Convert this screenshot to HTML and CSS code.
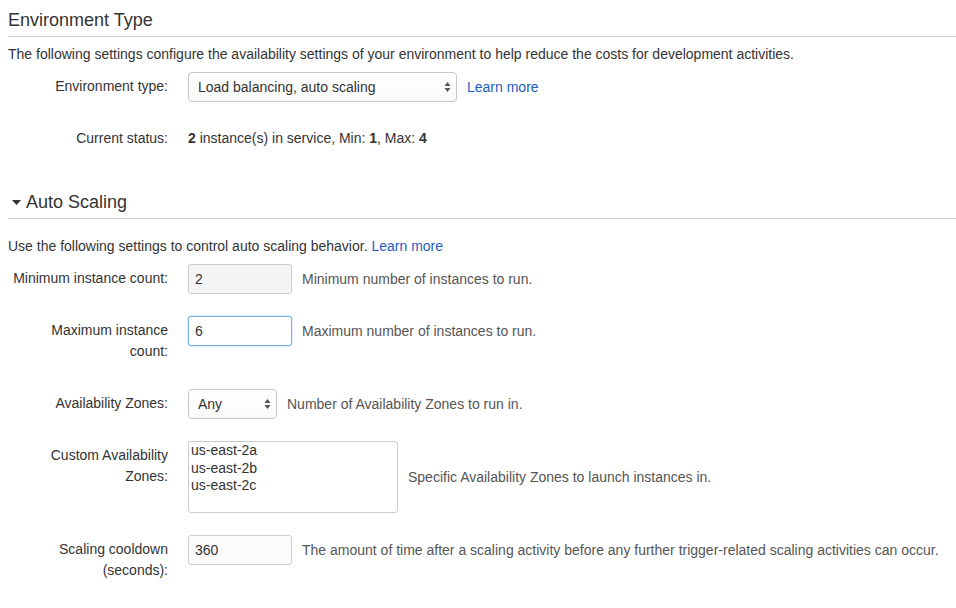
FILE: index.html
```html
<!DOCTYPE html>
<html lang="en">
<head>
<meta charset="utf-8">
<title>Environment Type</title>
<link rel="stylesheet" href="styles.css">
</head>
<body>
<div class="page">
  <section class="section">
    <h2 class="section-title">Environment Type</h2>
    <p class="intro">The following settings configure the availability settings of your environment to help reduce the costs for development activities.</p>
    <div class="row">
      <div class="label">Environment type:</div>
      <div class="field">
        <div class="select select-wide">
          <span>Load balancing, auto scaling</span>
          <svg class="arrows" width="7" height="12" viewBox="0 0 7 12"><path d="M3.5 1 L6.5 5 L0.5 5 Z M3.5 11 L6.5 7 L0.5 7 Z" fill="#555"/></svg>
        </div>
        <a class="link" href="#">Learn more</a>
      </div>
    </div>
    <div class="row">
      <div class="label">Current status:</div>
      <div class="value"><b>2</b> instance(s) in service, Min: <b>1</b>, Max: <b>4</b></div>
    </div>
  </section>

  <section class="section section-second">
    <h2 class="section-title">
      <svg class="caret" width="9" height="5" viewBox="0 0 9 5"><path d="M0 0 L9 0 L4.5 5 Z" fill="#333"/></svg>Auto Scaling
    </h2>
    <p class="intro intro-second">Use the following settings to control auto scaling behavior. <a class="link" href="#">Learn more</a></p>

    <div class="row">
      <div class="label">Minimum instance count:</div>
      <div class="field">
        <input class="input input-readonly" type="text" value="2">
        <span class="help">Minimum number of instances to run.</span>
      </div>
    </div>

    <div class="row">
      <div class="label">Maximum instance count:</div>
      <div class="field">
        <input class="input input-focus" type="text" value="6">
        <span class="help">Maximum number of instances to run.</span>
      </div>
    </div>

    <div class="row">
      <div class="label">Availability Zones:</div>
      <div class="field">
        <div class="select select-small">
          <span>Any</span>
          <svg class="arrows" width="7" height="12" viewBox="0 0 7 12"><path d="M3.5 1 L6.5 5 L0.5 5 Z M3.5 11 L6.5 7 L0.5 7 Z" fill="#555"/></svg>
        </div>
        <span class="help">Number of Availability Zones to run in.</span>
      </div>
    </div>

    <div class="row">
      <div class="label">Custom Availability Zones:</div>
      <div class="field">
        <div class="listbox">
          <div class="option">us-east-2a</div>
          <div class="option">us-east-2b</div>
          <div class="option">us-east-2c</div>
        </div>
        <span class="help">Specific Availability Zones to launch instances in.</span>
      </div>
    </div>

    <div class="row">
      <div class="label">Scaling cooldown (seconds):</div>
      <div class="field">
        <input class="input input-light" type="text" value="360">
        <span class="help">The amount of time after a scaling activity before any further trigger-related scaling activities can occur.</span>
      </div>
    </div>
  </section>
</div>
</body>
</html>
```

FILE: styles.css
```css
* {
  box-sizing: border-box;
}

html, body {
  margin: 0;
  padding: 0;
  background: #ffffff;
}

body {
  font-family: "Liberation Sans", Arial, sans-serif;
  font-size: 14px;
  color: #333333;
}

.page {
  padding: 8px 0 0 8px;
}

.section-title {
  margin: 0;
  font-size: 18px;
  font-weight: normal;
  line-height: 24px;
  padding-bottom: 4px;
  border-bottom: 1px solid #cccccc;
  color: #333333;
  display: flex;
  align-items: center;
}

.section-second {
  margin-top: 36px;
}

.caret {
  margin-left: 4px;
  margin-right: 5px;
  flex: none;
}

.intro {
  margin: 8px 0 9px 0;
  line-height: 18px;
}

.intro-second {
  margin-top: 18px;
}

.row {
  display: flex;
  align-items: flex-start;
  margin-bottom: 22px;
}

.label {
  width: 180px;
  flex: none;
  text-align: right;
  padding: 4px 20px 5px 4px;
  line-height: 21px;
  color: #333333;
}

.value {
  padding: 4px 0 5px 0;
  line-height: 21px;
  color: #333333;
}

.field {
  display: flex;
  align-items: center;
  gap: 10px;
}

.link {
  color: #1f5cc2;
  text-decoration: none;
}

.help {
  color: #555555;
  white-space: nowrap;
}

.select {
  height: 30px;
  border: 1px solid #c6c6c6;
  border-radius: 4px;
  background: linear-gradient(#ffffff, #fafafa);
  display: flex;
  align-items: center;
  justify-content: space-between;
  padding: 0 5px 0 9px;
  color: #333333;
}

.select-wide {
  width: 269px;
}

.select-small {
  width: 89px;
}

.arrows {
  flex: none;
}

.input {
  width: 104px;
  height: 30px;
  border: 1px solid #cccccc;
  border-radius: 3px;
  padding: 0 6px;
  font-family: "Liberation Sans", Arial, sans-serif;
  font-size: 14px;
  color: #333333;
  background: #ffffff;
  outline: none;
}

.input-readonly {
  background: #f5f5f5;
}

.input-light {
  background: #fbfbfb;
}

.input-focus {
  border-color: #73b3ea;
  box-shadow: 0 0 2px rgba(102, 175, 233, 0.7);
}

.listbox {
  width: 210px;
  height: 72px;
  border: 1px solid #cccccc;
  border-radius: 3px;
  padding: 0 2px;
  background: #ffffff;
}

.option {
  line-height: 17.5px;
  color: #333333;
}
```
